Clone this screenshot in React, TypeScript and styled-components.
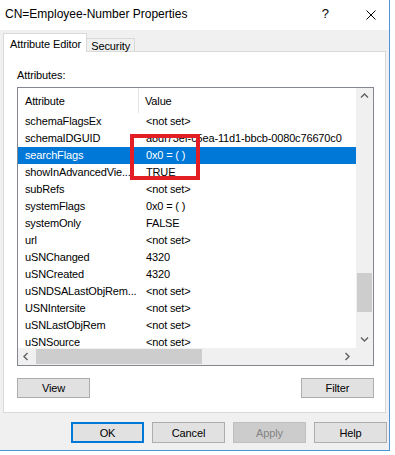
import styled, { createGlobalStyle } from "styled-components";

const GlobalStyle = createGlobalStyle`
  html, body {
    margin: 0;
    padding: 0;
    background: #ffffff;
  }
  body {
    font-family: "Liberation Sans", Arial, sans-serif;
    color: #000000;
  }
`;

type AttrRow = { name: string; value: string };

const rows: AttrRow[] = [
  { name: "schemaFlagsEx", value: "<not set>" },
  { name: "schemaIDGUID", value: "a8df73ef-c5ea-11d1-bbcb-0080c76670c0" },
  { name: "searchFlags", value: "0x0 = ( )" },
  { name: "showInAdvancedVie...", value: "TRUE" },
  { name: "subRefs", value: "<not set>" },
  { name: "systemFlags", value: "0x0 = ( )" },
  { name: "systemOnly", value: "FALSE" },
  { name: "url", value: "<not set>" },
  { name: "uSNChanged", value: "4320" },
  { name: "uSNCreated", value: "4320" },
  { name: "uSNDSALastObjRem...", value: "<not set>" },
  { name: "USNIntersite", value: "<not set>" },
  { name: "uSNLastObjRem", value: "<not set>" },
  { name: "uSNSource", value: "<not set>" },
];

const selectedIndex = 2;

type Dir = "up" | "down" | "left" | "right";

const chevronPaths: Record<Dir, string> = {
  up: "M1 5.5 L4.5 2 L8 5.5",
  down: "M1 2.5 L4.5 6 L8 2.5",
  left: "M5.5 1 L2 4.5 L5.5 8",
  right: "M2.5 1 L6 4.5 L2.5 8",
};

const Chevron = ({ dir }: { dir: Dir }) => (
  <svg width="9" height="9" viewBox="0 0 9 9">
    <path d={chevronPaths[dir]} fill="none" stroke="#606060" strokeWidth="1.4" />
  </svg>
);

const App = () => {
  return (
    <>
      <GlobalStyle />
      <Window>
        <TitleBar>
          <Title>CN=Employee-Number Properties</Title>
          <HelpGlyph>?</HelpGlyph>
          <svg width="10" height="10" viewBox="0 0 10 10">
            <path d="M0.5 0.5 L9.5 9.5 M9.5 0.5 L0.5 9.5" stroke="#000" strokeWidth="1" />
          </svg>
        </TitleBar>

        <TabStrip>
          <Tab $active>Attribute Editor</Tab>
          <Tab>Security</Tab>
        </TabStrip>

        <Panel>
          <FieldLabel>Attributes:</FieldLabel>
          <ListBox>
            <Viewport>
              <HeaderRow>
                <HeaderCell $first>Attribute</HeaderCell>
                <HeaderCell>Value</HeaderCell>
              </HeaderRow>
              {rows.map((r, i) => (
                <ListRow key={r.name} $selected={i === selectedIndex}>
                  <NameCell>{r.name}</NameCell>
                  <ValueCell>{r.value}</ValueCell>
                </ListRow>
              ))}
            </Viewport>

            <VScroll>
              <ArrowBox>
                <Chevron dir="up" />
              </ArrowBox>
              <VTrack>
                <VThumb />
              </VTrack>
              <ArrowBox>
                <Chevron dir="down" />
              </ArrowBox>
            </VScroll>

            <HScroll>
              <ArrowBox>
                <Chevron dir="left" />
              </ArrowBox>
              <HTrack>
                <HThumb />
              </HTrack>
              <ArrowBox>
                <Chevron dir="right" />
              </ArrowBox>
            </HScroll>

            <Corner />
            <Callout />
          </ListBox>

          <PanelButtons>
            <Button>View</Button>
            <Button>Filter</Button>
          </PanelButtons>
        </Panel>

        <DialogButtons>
          <Button $default>OK</Button>
          <Button>Cancel</Button>
          <Button disabled>Apply</Button>
          <Button>Help</Button>
        </DialogButtons>
      </Window>
    </>
  );
};

const Window = styled.div`
  width: 389px;
  height: 450px;
  border-right: 1px solid #4a94d8;
  border-bottom: 1px solid #4a94d8;
  background: #f0f0f0;
  display: flex;
  flex-direction: column;
`;

const TitleBar = styled.div`
  flex-shrink: 0;
  height: 30px;
  display: flex;
  align-items: center;
  padding: 0 13px 0 5px;
  background: #ffffff;
`;

const Title = styled.div`
  flex: 1;
  font-size: 12px;
  padding-bottom: 3px;
`;

const HelpGlyph = styled.span`
  font-size: 13px;
  margin-right: 37px;
  padding-bottom: 3px;
`;

const TabStrip = styled.div`
  position: relative;
  z-index: 1;
  display: flex;
  align-items: flex-end;
  height: 19px;
  margin: 3px 0 -1px 3px;
`;

const Tab = styled.div<{ $active?: boolean }>`
  box-sizing: border-box;
  font-size: 11px;
  letter-spacing: -0.1px;
  line-height: 13px;
  white-space: nowrap;
  border-top: 1px solid #d9d9d9;
  border-right: 1px solid #d9d9d9;
  border-left: ${({ $active }) => ($active ? "1px solid #d9d9d9" : "none")};
  background: ${({ $active }) => ($active ? "#ffffff" : "#f0f0f0")};
  height: ${({ $active }) => ($active ? "19px" : "13px")};
  margin-bottom: ${({ $active }) => ($active ? "0" : "1px")};
  padding: ${({ $active }) => ($active ? "4px 5px 0 6px" : "1px 4px 0 4px")};
`;

const Panel = styled.div`
  box-sizing: border-box;
  height: 362px;
  margin: 0 3px;
  padding: 16px 11px 0 13px;
  background: #ffffff;
  border: 1px solid #d9d9d9;
  display: flex;
  flex-direction: column;
`;

const FieldLabel = styled.div`
  font-size: 11px;
  letter-spacing: -0.1px;
  line-height: 14px;
  margin-bottom: 5px;
`;

const ListBox = styled.div`
  position: relative;
  box-sizing: border-box;
  width: 357px;
  height: 279px;
  border: 1px solid #828790;
  background: #ffffff;
  display: grid;
  grid-template-columns: 1fr 17px;
  grid-template-rows: 1fr 17px;
`;

const Viewport = styled.div`
  overflow: hidden;
  font-size: 11px;
  letter-spacing: -0.15px;
`;

const HeaderRow = styled.div`
  display: grid;
  grid-template-columns: 121px 1fr;
  height: 25px;
`;

const HeaderCell = styled.div<{ $first?: boolean }>`
  display: flex;
  align-items: center;
  padding-left: ${({ $first }) => ($first ? "7px" : "6px")};
  border-right: ${({ $first }) => ($first ? "1px solid #e5e5e5" : "none")};
`;

const ListRow = styled.div<{ $selected?: boolean }>`
  display: grid;
  grid-template-columns: 121px 1fr;
  height: 17px;
  line-height: 17px;
  background: ${({ $selected }) => ($selected ? "#0078d7" : "transparent")};
  color: ${({ $selected }) => ($selected ? "#ffffff" : "#000000")};
`;

const NameCell = styled.div`
  padding-left: 7px;
  white-space: nowrap;
  overflow: hidden;
`;

const ValueCell = styled.div`
  padding-left: 7px;
  white-space: nowrap;
  overflow: hidden;
`;

const VScroll = styled.div`
  display: flex;
  flex-direction: column;
  background: #f0f0f0;
`;

const HScroll = styled.div`
  display: flex;
  background: #f0f0f0;
`;

const ArrowBox = styled.div`
  flex-shrink: 0;
  width: 17px;
  height: 17px;
  display: flex;
  align-items: center;
  justify-content: center;
`;

const VTrack = styled.div`
  flex: 1;
  display: flex;
  flex-direction: column;
`;

const VThumb = styled.div`
  margin: 168px 1px 0;
  height: 39px;
  background: #cdcdcd;
`;

const HTrack = styled.div`
  flex: 1;
  display: flex;
`;

const HThumb = styled.div`
  margin: 1px 0 1px 1px;
  width: 166px;
  background: #cdcdcd;
`;

const Corner = styled.div`
  background: #f0f0f0;
`;

const Callout = styled.div`
  position: absolute;
  left: 112px;
  top: 46px;
  width: 70px;
  height: 46px;
  box-sizing: border-box;
  border: 4px solid #e31e24;
  pointer-events: none;
`;

const PanelButtons = styled.div`
  width: 357px;
  display: flex;
  justify-content: space-between;
  margin-top: 12px;
`;

const Button = styled.button<{ $default?: boolean }>`
  box-sizing: border-box;
  width: 73px;
  height: ${({ $default }) => ($default ? "21px" : "20px")};
  padding: 0;
  font-family: "Liberation Sans", Arial, sans-serif;
  font-size: 11px;
  letter-spacing: -0.1px;
  color: #000000;
  background: #e1e1e1;
  border: ${({ $default }) => ($default ? "2px solid #0078d7" : "1px solid #adadad")};
  border-radius: 0;

  &:disabled {
    background: #cccccc;
    border-color: #bfbfbf;
    color: #838383;
  }
`;

const DialogButtons = styled.div`
  display: flex;
  justify-content: flex-end;
  gap: 8px;
  margin-top: 9px;
  padding-right: 2px;

  & > button {
    height: 21px;
  }
`;

export default App;
